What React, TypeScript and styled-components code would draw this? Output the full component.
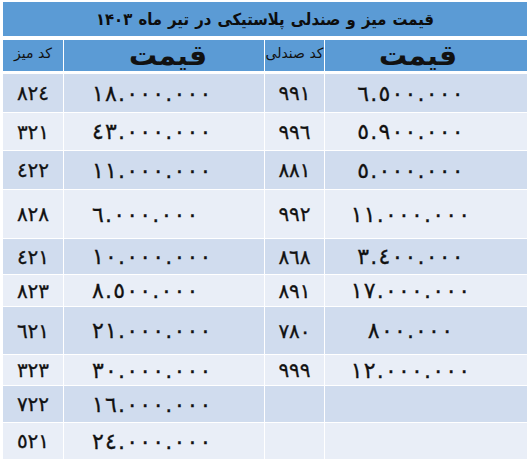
import styled, { createGlobalStyle } from "styled-components"

const GlobalStyle = createGlobalStyle`
  html, body {
    margin: 0;
    padding: 0;
    background: #ffffff;
  }
  body {
    font-family: "DejaVu Sans", sans-serif;
    color: #111111;
  }
`

const Page = styled.div`
  width: 524px;
  padding: 2px 0 0 3px;
`

const TitleBar = styled.div`
  height: 34px;
  background: #5b9bd5;
  display: flex;
  align-items: center;
  justify-content: center;
  font-family: "DejaVu Sans Condensed", "DejaVu Sans", sans-serif;
  font-size: 16.5px;
  word-spacing: 1px;
  font-weight: bold;
  color: #0d0d0d;
`

const Table = styled.div`
  margin-top: 4px;
  display: grid;
  grid-template-columns: 60px 200px 59px 202px;
  column-gap: 1px;
`

const HeadCell = styled.div<{ $big?: boolean; $shift?: number }>`
  height: 31px;
  background: #5b9bd5;
  display: flex;
  justify-content: center;
  align-items: ${(p) => (p.$big ? "center" : "flex-start")};
  padding-top: ${(p) => (p.$big ? "0" : "5px")};
  padding-left: ${(p) => Math.max(p.$shift ?? 0, 0)}px;
  padding-right: ${(p) => Math.max(-(p.$shift ?? 0), 0)}px;
  box-sizing: border-box;
  font-size: ${(p) => (p.$big ? "28px" : "14px")};
  font-weight: ${(p) => (p.$big ? "bold" : "normal")};
  margin-bottom: 3px;
`

const Cell = styled.div<{ $dark: boolean; $h: number; $align: "center" | "left"; $pad?: number; $code?: boolean }>`
  height: ${(p) => p.$h}px;
  background: ${(p) => (p.$dark ? "#d0dcee" : "#e9eef7")};
  border-bottom: 1px solid #ffffff;
  display: flex;
  align-items: center;
  justify-content: ${(p) => (p.$align === "left" ? "flex-start" : "center")};
  padding-left: ${(p) => (p.$align === "left" ? p.$pad ?? 0 : 0)}px;
  padding-right: ${(p) => (p.$align === "center" ? p.$pad ?? 0 : 0)}px;
  box-sizing: border-box;
  font-size: ${(p) => (p.$code ? "20px" : "22px")};
  -webkit-text-stroke: 0.3px #111111;
  white-space: nowrap;
`

const Glyph = styled.span`
  display: inline-block;
  margin-right: 1.2px;
`

function Spaced({ text }: { text: string }) {
  return (
    <span dir="ltr">
      {Array.from(text).map((ch, i) => (
        <Glyph key={i}>{ch}</Glyph>
      ))}
    </span>
  )
}

type Row = { h: number; table: string; tablePrice: string; chair: string; chairPrice: string }

const rows: Row[] = [
  { h: 39, table: "٨٢٤", tablePrice: "١٨.٠٠٠.٠٠٠", chair: "٩٩١", chairPrice: "٦.٥٠٠.٠٠٠" },
  { h: 38, table: "٣٢١", tablePrice: "٤٣.٠٠٠.٠٠٠", chair: "٩٩٦", chairPrice: "٥.٩٠٠.٠٠٠" },
  { h: 39, table: "٤٢٢", tablePrice: "١١.٠٠٠.٠٠٠", chair: "٨٨١", chairPrice: "٥.٠٠٠.٠٠٠" },
  { h: 49, table: "٨٢٨", tablePrice: "٦.٠٠٠.٠٠٠", chair: "٩٩٢", chairPrice: "١١.٠٠٠.٠٠٠" },
  { h: 36, table: "٤٢١", tablePrice: "١٠.٠٠٠.٠٠٠", chair: "٨٦٨", chairPrice: "٣.٤٠٠.٠٠٠" },
  { h: 32, table: "٨٢٣", tablePrice: "٨.٥٠٠.٠٠٠", chair: "٨٩١", chairPrice: "١٧.٠٠٠.٠٠٠" },
  { h: 48, table: "٦٢١", tablePrice: "٢١.٠٠٠.٠٠٠", chair: "٧٨٠", chairPrice: "٨٠٠.٠٠٠" },
  { h: 31, table: "٣٢٣", tablePrice: "٣٠.٠٠٠.٠٠٠", chair: "٩٩٩", chairPrice: "١٢.٠٠٠.٠٠٠" },
  { h: 37, table: "٧٢٢", tablePrice: "١٦.٠٠٠.٠٠٠", chair: "", chairPrice: "" },
  { h: 37, table: "٥٢١", tablePrice: "٢٤.٠٠٠.٠٠٠", chair: "", chairPrice: "" },
]

export default function App() {
  return (
    <Page>
      <GlobalStyle />
      <TitleBar dir="rtl">قیمت میز و صندلی پلاستیکی در تیر ماه ۱۴۰۳</TitleBar>
      <Table>
        <HeadCell dir="rtl">کد میز</HeadCell>
        <HeadCell $big $shift={8} dir="rtl">قیمت</HeadCell>
        <HeadCell dir="rtl">کد صندلی</HeadCell>
        <HeadCell $big $shift={-16} dir="rtl">قیمت</HeadCell>
        {rows.map((r, i) => {
          const dark = i % 2 === 0
          return [
            <Cell key={`a${i}`} $dark={dark} $h={r.h} $align="center" $code>{r.table}</Cell>,
            <Cell key={`b${i}`} $dark={dark} $h={r.h} $align="left" $pad={28}>
              <Spaced text={r.tablePrice} />
            </Cell>,
            <Cell key={`c${i}`} $dark={dark} $h={r.h} $align="center" $code>{r.chair}</Cell>,
            <Cell key={`d${i}`} $dark={dark} $h={r.h} $align="center" $pad={30}>
              <Spaced text={r.chairPrice} />
            </Cell>,
          ]
        })}
      </Table>
    </Page>
  )
}
